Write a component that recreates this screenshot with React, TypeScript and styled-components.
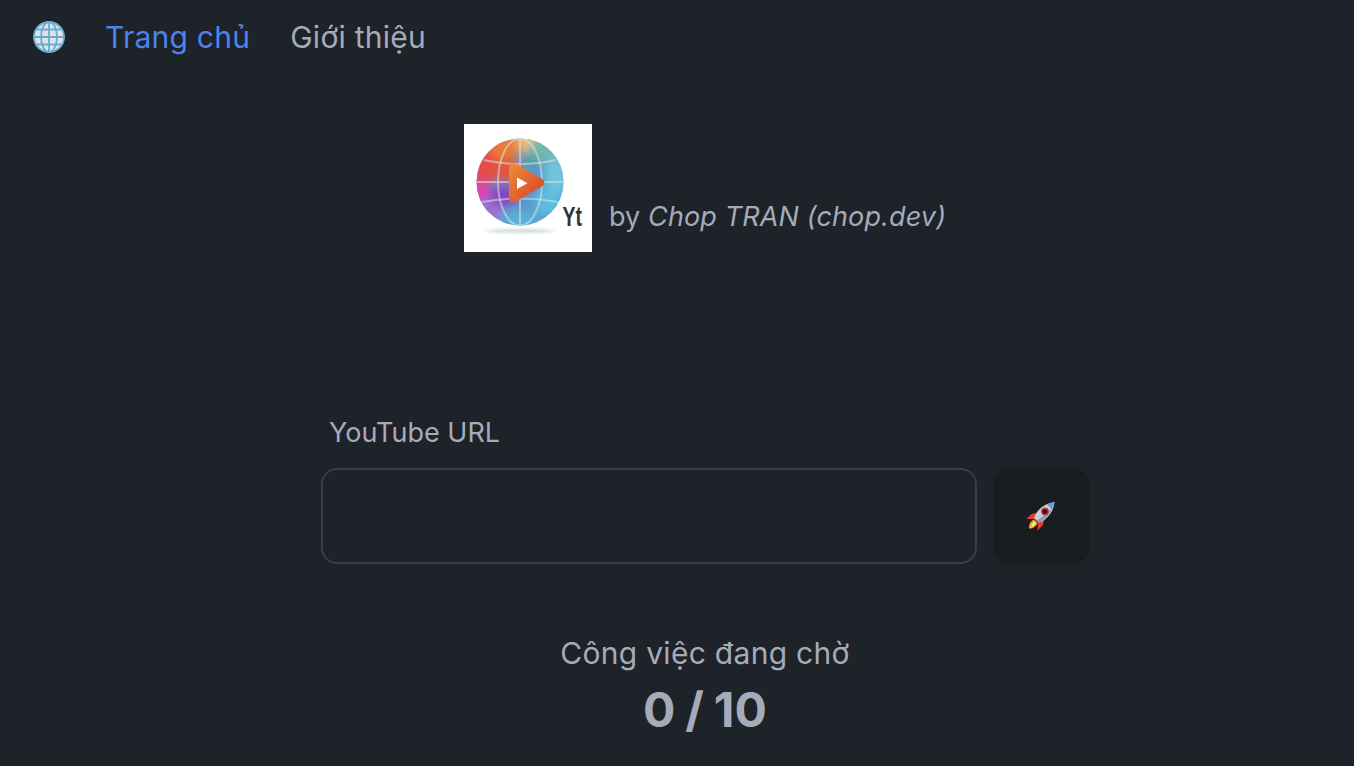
import styled, { createGlobalStyle } from "styled-components";

const GlobalStyle = createGlobalStyle`
  html, body {
    margin: 0;
    padding: 0;
    background-color: #1e2229;
  }
  * {
    box-sizing: border-box;
  }
`;

const Page = styled.div`
  height: 766px;
  overflow: hidden;
  background-color: #1e2229;
  color: #a6abb9;
  font-family: Inter, "Noto Sans", sans-serif;
`;

const Nav = styled.nav`
  display: flex;
  align-items: center;
  gap: 40px;
  height: 74px;
  padding-left: 33px;
`;

const NavLink = styled.a<{ $active?: boolean }>`
  font-size: 30px;
  line-height: 36px;
  letter-spacing: 0.25px;
  color: ${(props) => (props.$active ? "#4d83ec" : "#a6abb9")};
`;

const Main = styled.main`
  display: flex;
  flex-direction: column;
  align-items: center;
  padding: 50px 0 0 56px;
`;

const Brand = styled.div`
  display: flex;
  align-items: flex-end;
  gap: 17px;
`;

const LogoBox = styled.div`
  width: 128px;
  height: 128px;
  background-color: #fff;
`;

const ByLine = styled.p`
  margin: 0 0 17px;
  font-size: 27px;
  line-height: 36px;
  letter-spacing: 0.13px;
  em {
    font-style: italic;
  }
`;

const Form = styled.form`
  width: 768px;
  margin-top: 163px;
`;

const FieldLabel = styled.label`
  display: block;
  padding-left: 8px;
  margin-bottom: 17px;
  font-size: 27px;
  line-height: 36px;
`;

const FieldRow = styled.div`
  display: flex;
  gap: 16px;
`;

const UrlInput = styled.input`
  flex: 1;
  height: 96px;
  padding: 0 32px;
  border: 2px solid #3a3e47;
  border-radius: 16px;
  background-color: transparent;
  color: inherit;
  font: inherit;
  outline: none;
`;

const SubmitButton = styled.button`
  display: flex;
  align-items: center;
  justify-content: center;
  width: 96px;
  height: 96px;
  padding: 0;
  border: none;
  border-radius: 16px;
  background-color: #1a1d20;
`;

const Pending = styled.div`
  display: flex;
  flex-direction: column;
  align-items: center;
  margin-top: 69px;
`;

const PendingLabel = styled.div`
  font-size: 30px;
  line-height: 40px;
  letter-spacing: 0.3px;
`;

const PendingCount = styled.div`
  margin-top: 9px;
  font-size: 48px;
  font-weight: 700;
  line-height: 56px;
  word-spacing: -1.5px;
`;

const GlobeIcon = () => (
  <svg width="32" height="32" viewBox="0 0 32 32" aria-hidden="true">
    <circle cx="16" cy="16" r="15.5" fill="#e2e2e2" />
    <g fill="none" stroke="#62aed2" strokeWidth="1.8">
      <circle cx="16" cy="16" r="15" />
      <ellipse cx="16" cy="16" rx="8" ry="15" />
      <path d="M16 1v30M1 16h30M3.500 8.500h25M3.500 23.500h25" />
    </g>
  </svg>
);

const RocketIcon = () => (
  <svg width="30" height="30" viewBox="0 0 30 30" aria-hidden="true">
    <path d="M3 27.500c0-4 1.500-7.500 5-9l3.500 3.500c-1 3.500-4.500 5.500-8.500 5.500z" fill="#f2b02c" />
    <path d="M5.500 25.500c.3-2 1.300-3.500 3-4.500l1 1c-.7 1.700-2 3-4 3.500z" fill="#fff2b0" />
    <path d="M.5 18l5-5 7-1.500-4.500 6.500z" fill="#e3402a" />
    <path d="M11.500 29.500l5.500-5.500 1.500-7-6.500 4.500z" fill="#e3402a" />
    <path d="M8 17.500C10.500 8.500 18.500 2.500 28.500 1 27.500 11.500 20.500 19 12.500 22z" fill="#c7d0da" />
    <path d="M21 3.500c2.300-1.100 4.900-2 7.500-2.500-.4 2.700-1.200 5.100-2.400 7.400z" fill="#5b9ddc" />
    <path d="M11 20l1-1.500C15.500 17 22 11.500 26 6.500c-2 7-7.500 12.500-13.500 15.500z" fill="#587a9e" opacity="0.6" />
    <path d="M9 17.500l4 4.500-1 .5-4-4z" fill="#c9302a" />
    <circle cx="19" cy="10.500" r="3.200" fill="#1c2028" stroke="#d8322a" strokeWidth="1.400" />
  </svg>
);

const Logo = () => (
  <svg width="128" height="128" viewBox="0 0 128 128" aria-hidden="true">
    <defs>
      <linearGradient id="playFill" x1="0" y1="0" x2="1" y2="1">
        <stop offset="0" stopColor="#ef8c3c" />
        <stop offset="1" stopColor="#d63f20" />
      </linearGradient>
      <clipPath id="globeClip">
        <circle cx="56" cy="58" r="43.500" />
      </clipPath>
      <filter id="soft" x="-50%" y="-50%" width="200%" height="200%">
        <feGaussianBlur stdDeviation="5" />
      </filter>
      <filter id="softSmall" x="-20%" y="-200%" width="140%" height="500%">
        <feGaussianBlur stdDeviation="1.500" />
      </filter>
    </defs>
    <ellipse cx="56" cy="107" rx="36" ry="1.500" fill="#c4d0d2" filter="url(#softSmall)" />
    <g clipPath="url(#globeClip)">
      <rect x="10" y="12" width="92" height="92" fill="#5a96cc" />
      <g filter="url(#soft)">
        <ellipse cx="62" cy="16" rx="14" ry="12" fill="#efc07e" />
        <ellipse cx="38" cy="24" rx="18" ry="14" fill="#ec7a38" />
        <ellipse cx="20" cy="44" rx="14" ry="18" fill="#e8484a" />
        <ellipse cx="42" cy="46" rx="14" ry="12" fill="#e2553a" />
        <ellipse cx="16" cy="68" rx="10" ry="10" fill="#e23cb4" />
        <ellipse cx="40" cy="72" rx="14" ry="10" fill="#8a3fc0" />
        <ellipse cx="26" cy="88" rx="12" ry="10" fill="#a66ad2" />
        <ellipse cx="80" cy="24" rx="14" ry="14" fill="#72b8a8" />
        <ellipse cx="66" cy="36" rx="8" ry="8" fill="#4fa0a2" />
        <ellipse cx="92" cy="52" rx="12" ry="20" fill="#6fc6dc" />
        <ellipse cx="84" cy="78" rx="14" ry="14" fill="#5cbfe2" />
        <ellipse cx="56" cy="96" rx="20" ry="8" fill="#58b4da" />
      </g>
      <g fill="none" stroke="#d6e6e4" strokeOpacity="0.55" strokeWidth="2">
        <ellipse cx="56" cy="58" rx="22" ry="43.500" />
        <path d="M56 14v88M12 58h88M20 36q36 8 72 0M18 78q38-7 76 0" />
      </g>
    </g>
    <path
      d="M45 43c0-3.500 3-5 6-3.500l27 15.500c3 1.800 3 5.500 0 7.300L51 78c-3 1.500-6 0-6-3.500z"
      fill="url(#playFill)"
    />
    <path d="M53 53.500l10.500 5.800L53 65z" fill="#fff" />
    <text
      x="98.500"
      y="102"
      fill="#333"
      fontFamily="'Liberation Sans', sans-serif"
      fontSize="27"
      fontWeight="700"
      textLength="19.500"
      lengthAdjust="spacingAndGlyphs"
    >
      Yt
    </text>
  </svg>
);

const App = () => {
  return (
    <Page>
      <GlobalStyle />
      <Nav>
        <GlobeIcon />
        <NavLink $active>Trang chủ</NavLink>
        <NavLink>Giới thiệu</NavLink>
      </Nav>
      <Main>
        <Brand>
          <LogoBox>
            <Logo />
          </LogoBox>
          <ByLine>
            by <em>Chop TRAN (chop.dev)</em>
          </ByLine>
        </Brand>
        <Form onSubmit={(e) => e.preventDefault()}>
          <FieldLabel htmlFor="url">YouTube URL</FieldLabel>
          <FieldRow>
            <UrlInput id="url" type="text" />
            <SubmitButton type="submit">
              <RocketIcon />
            </SubmitButton>
          </FieldRow>
        </Form>
        <Pending>
          <PendingLabel>Công việc đang chờ</PendingLabel>
          <PendingCount>0 / 10</PendingCount>
        </Pending>
      </Main>
    </Page>
  );
};

export default App;
